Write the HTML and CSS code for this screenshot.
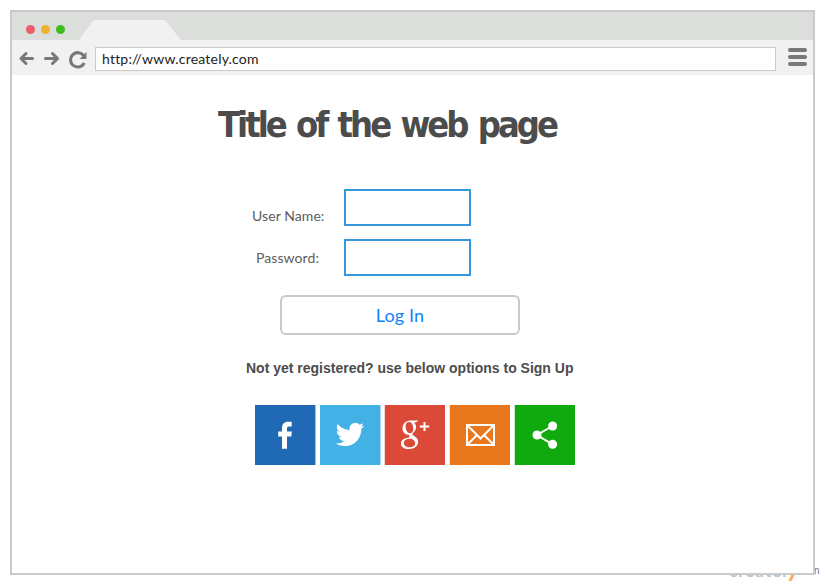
FILE: index.html
```html
<!DOCTYPE html>
<html lang="en">
<head>
<meta charset="utf-8">
<title>Title of the web page</title>
<link rel="stylesheet" href="styles.css">
</head>
<body>
<div class="watermark"><span class="brand">create<i>l</i><b>y</b></span><span class="tail">n</span></div>
<div class="window">
  <div class="tabs">
    <span class="dot red"></span><span class="dot amber"></span><span class="dot green"></span>
    <svg class="tab" width="102" height="20" viewBox="0 0 102 20"><path d="M0 20 14.500 0H86l16 20z" fill="#f1f1f1"/></svg>
  </div>
  <div class="toolbar">
    <svg class="nav" width="76" height="35" viewBox="0 0 76 35" fill="none" stroke="#787878" stroke-width="3">
      <path d="M9.500 18.500H20.500M14 13.500 9 18.500l5 5M33.500 18.500h12M40.500 13.500l5 5-5 5" stroke-linecap="round" stroke-linejoin="round"/>
      <path d="M71.800 15.800A7.200 7.200 0 1 0 72.300 23"/>
      <path d="M74.500 12v7h-7z" fill="#787878" stroke="none"/>
    </svg>
    <div class="address">http://www.creately.com</div>
    <div class="menu"><span></span><span></span><span></span></div>
  </div>
  <main class="page">
    <h1>Title of the web page</h1>
    <form class="login">
      <label class="user" for="user">User Name:</label><input id="user" type="text">
      <label class="pass" for="pass">Password:</label><input id="pass" type="password">
      <button type="button">Log In</button>
    </form>
    <p class="signup">Not yet registered? use below options to Sign Up</p>
    <div class="social">
      <svg class="facebook" viewBox="0 0 60 60"><path d="M27 43.800V31.500h-3.800v-5H27v-3.300c0-4.300 2.300-6.400 6.200-6.400h3.500v4.700h-2.500c-1.600 0-2.200.7-2.200 2.200v2.800h4.800l-.5 5H32v12.300z" fill="#fff"/></svg>
      <svg class="twitter" viewBox="0 0 60 60"><g transform="translate(15.700 15.200) scale(1.190)"><path d="M23.950 4.570a10 10 0 0 1-2.820.77 4.960 4.960 0 0 0 2.160-2.720c-.95.550-2 .950-3.130 1.180a4.920 4.920 0 0 0-8.380 4.480C7.690 8.090 4.070 6.130 1.640 3.160a4.820 4.820 0 0 0-.67 2.480c0 1.710.87 3.210 2.190 4.100a4.900 4.900 0 0 1-2.230-.62v.060a4.920 4.920 0 0 0 3.950 4.830 5 5 0 0 1-2.210.080 4.940 4.940 0 0 0 4.600 3.420A9.870 9.870 0 0 1 0 19.540a14 14 0 0 0 7.550 2.210c9.050 0 14-7.500 14-13.990v-.63a9.900 9.900 0 0 0 2.400-2.560z" fill="#fff"/></g></svg>
      <svg class="google" viewBox="0 0 60 60">
        <path fill="#fff" fill-rule="evenodd" d="M33.500 15.500 31 17.500H28.800C30.300 18.800 31 20.300 31 22.200c0 2.700-1.300 4.200-2.900 5.500-1.100.9-1.100 1.700.1 2.600 2.500 1.900 4.900 3.300 4.900 6.500 0 4-3.300 7.200-9.200 7.200-4.900 0-8-2.100-8-5.300 0-3.600 3.500-5.900 9-6.200-.8-.9-1.100-1.700-.7-2.800-4 .3-6.700-2.700-6.700-6.300 0-4.200 3-7.900 8-7.900zM24.200 17c-2.200 0-3.600 1.600-3.600 4.200 0 3.400 1.700 7 4.400 7 2 0 3.300-1.500 3.300-4.200 0-3.400-1.500-7-4.100-7zM25.800 33.800c-4.200 0-7 1.400-7 4.200 0 2.600 2.300 4.300 5.900 4.300 3.400 0 5.500-1.500 5.500-4 0-2-1.300-3.100-3.400-4.500z"/>
        <path d="M34.800 21.500h9.400M39.500 17v9" fill="none" stroke="#fff" stroke-width="2"/>
      </svg>
      <svg class="mail" viewBox="0 0 60 60" fill="none" stroke="#fff" stroke-width="2"><path d="M17 20h27v20H17zM17.500 20.500 30.500 33.500l13-13M17.500 39.500l9.500-9.500M43.500 39.500 34 30"/></svg>
      <svg class="share" viewBox="0 0 60 60" fill="#fff"><path d="M37.500 21 22 30l15.500 9.300" fill="none" stroke="#fff" stroke-width="2"/><circle cx="37.600" cy="21" r="4.500"/><circle cx="22" cy="30" r="4.500"/><circle cx="37.600" cy="39.300" r="4.500"/></svg>
    </div>
  </main>
</div>
</body>
</html>
```
FILE: styles.css
```css
* { box-sizing: border-box; }
body {
  margin: 0;
  padding: 10px;
  height: 585px;
  overflow: hidden;
  background: #fff;
  font-family: Lato, sans-serif;
  color: #5c5c5c;
}
.window {
  position: relative;
  width: 805px;
  height: 565px;
  border: 2px solid #c9cac9;
  background: #fff;
}
.tabs {
  display: flex;
  align-items: flex-end;
  height: 28px;
  padding-left: 13.500px;
  background: #dcdedb;
}
.dot {
  width: 9px;
  height: 9px;
  margin: 0 6px 6px 0;
  border-radius: 50%;
}
.red { background: #ea5e6c; }
.amber { background: #ebb32e; }
.green { background: #3bbd1d; }
.tab { display: block; margin-left: 8.500px; }
.toolbar {
  display: flex;
  align-items: center;
  height: 35px;
  background: #f1f1f1;
}
.nav { display: block; margin-right: 7px; }
.address {
  width: 681px;
  height: 24px;
  margin-top: 2px;
  padding-left: 6px;
  border: 1px solid #c9cac9;
  background: #fff;
  color: #222;
  font-size: 14px;
  line-height: 22px;
  letter-spacing: 0.200px;
}
.menu {
  display: grid;
  gap: 3px;
  margin: -1px 0 0 12px;
}
.menu span {
  width: 19px;
  height: 4px;
  border-radius: 2px;
  background: #787878;
}
h1 {
  margin: 0 0 0 206px;
  padding-top: 29px;
  height: 114px;
  color: #4c4c4c;
  font: bold 36px/42px "DejaVu Sans Condensed", "DejaVu Sans", sans-serif;
  font-stretch: semi-condensed;
  letter-spacing: -3px;
  word-spacing: 3px;
  white-space: nowrap;
}
.login {
  display: grid;
  grid-template-columns: 92px 127px;
  row-gap: 13px;
  margin-left: 240px;
}
label { font-size: 14px; line-height: 17px; letter-spacing: 0.080px; white-space: nowrap; }
.user { padding-top: 18px; }
.pass { padding: 10px 0 0 4px; }
input {
  width: 127px;
  height: 37px;
  border: 2px solid #3498db;
  background: #fff;
}
button {
  width: 240px;
  height: 40px;
  margin: 6px 0 0 28px;
  border: 2px solid #c9c9c9;
  border-radius: 6px;
  background: #fff;
  color: #0f82fa;
  font: 18px/36px Lato, sans-serif;
  letter-spacing: 0.150px;
  padding: 0;
}
.signup {
  margin: 25px 0 0 234px;
  color: #4c4c4c;
  font: bold 14px/17px "Liberation Sans", sans-serif;
  white-space: nowrap;
}
.social {
  display: grid;
  grid-template-columns: repeat(5, 60px);
  gap: 5px;
  margin: 28px 0 0 243px;
}
.social svg { display: block; width: 60px; height: 60px; }
.facebook { background: #1f69b5; box-shadow: 1px 0 #a2c1e0; }
.twitter { background: #43b1e5; box-shadow: 1px 0 #a7dbf3; }
.google { background: #db4a39; box-shadow: -1px 0 #f8d5d1; }
.mail { background: #e9781c; box-shadow: -1px 0 #f9dfca; }
.share { background: #10a90e; box-shadow: -1px 0 #c6eac6; }
.watermark {
  position: absolute;
  top: 560px;
  left: 729px;
  display: flex;
  white-space: nowrap;
}
.brand { width: 85px; margin-top: -2px; color: #b4c4d2; font: bold 17px/20px Lato, sans-serif; letter-spacing: 1px; }
.brand i { font-style: normal; }
.brand b { color: #f9a950; font-style: italic; font-size: 23px; }
.tail { color: #777; font: 10px/22px "Liberation Sans", sans-serif; }
```
